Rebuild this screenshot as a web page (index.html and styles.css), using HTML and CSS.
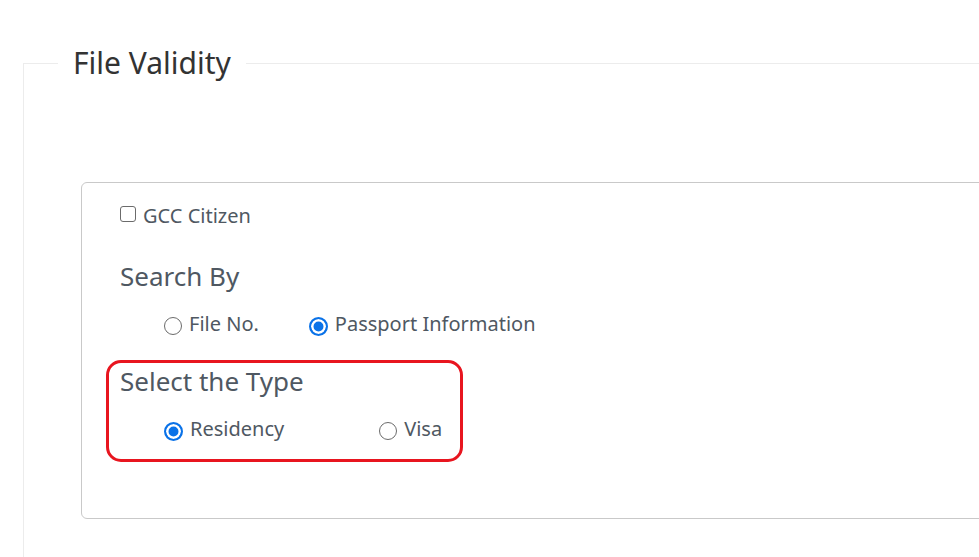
FILE: index.html
```html
<!DOCTYPE html>
<html>
<head>
<meta charset="utf-8">
<link rel="stylesheet" href="styles.css">
</head>
<body>
<div class="page">
  <fieldset class="validity">
    <legend class="validity-title">File Validity</legend>
    <div class="panel">
      <label class="check-row"><span class="checkbox"></span><span class="label-text">GCC Citizen</span></label>
      <div class="heading search-heading">Search By</div>
      <div class="radio-row">
        <label class="option opt-file"><span class="radio"></span><span class="label-text">File No.</span></label>
        <label class="option"><span class="radio checked"></span><span class="label-text">Passport Information</span></label>
      </div>
      <div class="type-box">
        <div class="heading">Select the Type</div>
        <div class="radio-row type-row">
          <label class="option opt-res"><span class="radio checked"></span><span class="label-text">Residency</span></label>
          <label class="option"><span class="radio"></span><span class="label-text">Visa</span></label>
        </div>
      </div>
    </div>
  </fieldset>
</div>
</body>
</html>
```
FILE: styles.css
```css
html, body {
  margin: 0;
  padding: 0;
  background: #fff;
}
body {
  width: 979px;
  height: 557px;
  overflow: hidden;
  font-family: "Noto Sans", "Open Sans", sans-serif;
}
.page {
  padding: 43px 0 0 23px;
}
.validity {
  margin: 0;
  border: 1px solid #ececec;
  padding: 0;
  width: 1100px;
  height: 600px;
  box-sizing: border-box;
}
.validity-title {
  margin-left: 34px;
  padding: 0 15px;
  font-size: 30px;
  line-height: 40px;
  color: #333;
}
.panel {
  margin: 99px 0 0 57px;
  height: 337px;
  box-sizing: border-box;
  border: 1px solid #c9c9c9;
  border-radius: 6px;
  padding: 20px 0 0 38px;
}
.check-row {
  display: flex;
  align-items: center;
  height: 24px;
}
.checkbox {
  width: 14px;
  height: 14px;
  border: 1.5px solid #6b6b6b;
  border-radius: 3px;
  margin-right: 7px;
  margin-top: -2px;
}
.label-text {
  font-size: 20px;
  color: #4f5862;
}
.heading {
  font-size: 26px;
  line-height: 32px;
  color: #4f5862;
}
.search-heading {
  margin-top: 33px;
}
.radio-row {
  display: flex;
  align-items: center;
  padding-left: 44px;
  height: 26px;
  margin-top: 18px;
}
.option {
  display: flex;
  align-items: center;
}
.radio {
  width: 16px;
  height: 16px;
  border: 1.5px solid #6b6b6b;
  border-radius: 50%;
  margin-right: 7px;
  margin-top: 6px;
  box-sizing: content-box;
}
.radio.checked {
  width: 15px;
  height: 15px;
  border: 2px solid #0a72e8;
  background: #0a72e8;
  box-shadow: inset 0 0 0 2.5px #fff;
}
.opt-file {
  margin-right: 50px;
}
.opt-res {
  margin-right: 95px;
}
.type-box {
  margin: 24px 0 0 -14px;
  width: 357px;
  height: 102px;
  box-sizing: border-box;
  border: 3px solid #e8151f;
  border-radius: 15px;
  padding: 2px 0 0 11px;
}
.type-row {
  margin-top: 18px;
  padding-left: 44px;
}
```
